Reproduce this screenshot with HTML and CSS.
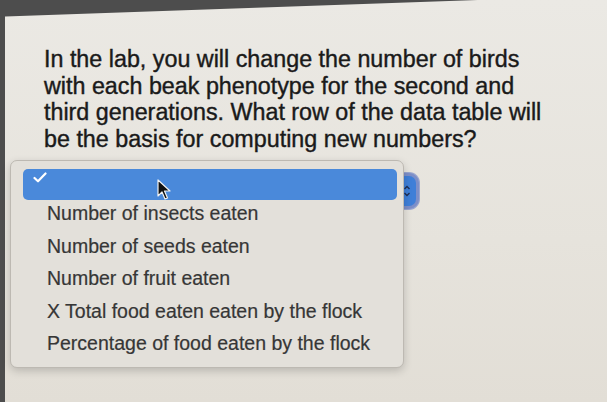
FILE: index.html
```html
<!DOCTYPE html>
<html lang="en">
<head>
<meta charset="utf-8">
<title>Beak phenotype question</title>
<link rel="stylesheet" href="styles.css">
</head>
<body>
  <div class="screen">
    <p class="question">In the lab, you will change the number of birds<br>with each beak phenotype for the second and<br>third generations. What row of the data table will<br>be the basis for computing new numbers?</p>

    <div class="picker">
      <div class="select">
        <span class="stepper">
          <svg viewBox="0 0 8 14" width="8" height="14"><path d="M1.5 5 L4 2.5 L6.5 5 M1.5 9 L4 11.5 L6.5 9" fill="none" stroke="#1f2f55" stroke-width="1.4"/></svg>
        </span>
      </div>

      <ul class="menu">
        <li class="item selected">
          <svg class="check" viewBox="0 0 14 11" width="14" height="11"><path d="M1.5 6 L5 9.3 L12.5 1.5" fill="none" stroke="#fff" stroke-width="2.2" stroke-linecap="round" stroke-linejoin="round"/></svg>
        </li>
        <li class="item first">Number of insects eaten</li>
        <li class="item">Number of seeds eaten</li>
        <li class="item">Number of fruit eaten</li>
        <li class="item">X Total food eaten eaten by the flock</li>
        <li class="item">Percentage of food eaten by the flock</li>
      </ul>

      <svg class="pointer" viewBox="0 0 14 22" width="14" height="22"><path d="M1 1 L1 17 L5 13 L8 20 L10.5 19 L7.5 12 L13 12 Z" fill="#111" stroke="#f2f2f2" stroke-width="1.2" stroke-linejoin="round"/></svg>
    </div>
  </div>
</body>
</html>
```

FILE: styles.css
```css
html, body {
  margin: 0;
  height: 100%;
}

body {
  background: #4d4d4d;
  font-family: "Liberation Sans", Arial, Helvetica, sans-serif;
  overflow: hidden;
}

/* the lit page surface, its top edge running slightly downhill */
.screen {
  height: 100%;
  margin-left: 5px;
  box-sizing: border-box;
  padding-top: 46px;
  background:
    linear-gradient(178deg, #4d4d4d 0 16px, transparent 17px),
    linear-gradient(180deg, #ebe9e4 0%, #e6e3dc 60%, #e2ded6 100%);
}

.question {
  margin: 0;
  padding-left: 39px;
  font-size: 23.3px;
  line-height: 26.6px;
  color: #1a1a1a;
  -webkit-text-stroke: 0.4px #1a1a1a;
  white-space: nowrap;
}

.picker {
  position: relative;
  margin-top: 24px;
  margin-left: 20px;
  width: 391px;
}

.select {
  height: 30px;
  border-radius: 7px;
  background: #3f7fd8;
  box-shadow: 0 0 0 3px #7d8fc8, 0 0 0 4px #9aa6cf;
  display: flex;
  justify-content: flex-end;
  align-items: center;
  padding-right: 5px;
}

.stepper {
  display: flex;
}

/* popup list drawn over the closed select */
.menu {
  position: absolute;
  left: -15px;
  top: -16px;
  width: 374px;
  margin: 0;
  padding: 8px 6px 7px 12px;
  list-style: none;
  background: #e3e0da;
  border: 1px solid #bdb9b2;
  border-radius: 7px;
  box-shadow: 0 3px 8px rgba(0, 0, 0, 0.18);
}

.item {
  height: 32.5px;
  display: flex;
  align-items: center;
  padding-left: 24px;
  font-size: 19.5px;
  color: #363636;
  -webkit-text-stroke: 0.2px #363636;
  white-space: nowrap;
}

.item.first {
  margin-top: -3px;
}

.item.selected {
  height: 31px;
  padding-left: 10px;
  align-items: flex-start;
  padding-top: 3px;
  box-sizing: border-box;
  background: #4a89da;
  border-radius: 5px;
}

.pointer {
  position: absolute;
  left: 132px;
  top: 3px;
}
```
